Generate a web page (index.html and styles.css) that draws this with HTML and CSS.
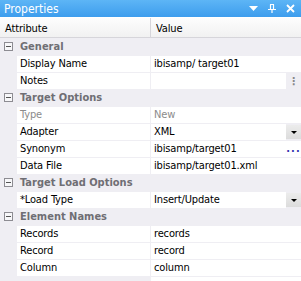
FILE: index.html
```html
<!DOCTYPE html>
<html lang="en">
<head>
  <meta charset="UTF-8" />
  <title>Properties</title>
  <link rel="stylesheet" href="styles.css">
</head>
<body>
  <div class="panel">
    <div class="titlebar">
      <span class="title">Properties</span>
      <div class="tools">
        <svg width="9" height="5" viewBox="0 0 9 5"><path d="M0 0h9L4.5 5z" fill="#fff"/></svg>
        <svg width="8" height="9" viewBox="0 0 8 9"><path d="M2 0.5h4M2.5 0.5v5M5.5 0.5v5M0 5.5h8M4 5.5v3.5" stroke="#fff" stroke-width="1.2" fill="none"/></svg>
        <svg width="9" height="9" viewBox="0 0 9 9"><path d="M1 1l7 7M8 1l-7 7" stroke="#fff" stroke-width="1.8"/></svg>
      </div>
    </div>
    <div class="head">
      <div class="head-name">Attribute</div>
      <div class="head-value">Value</div>
    </div>

    <div class="section"><span class="toggle"></span>General</div>
    <div class="row"><div class="name">Display Name</div><div class="value">ibisamp/ target01</div></div>
    <div class="row"><div class="name">Notes</div><div class="value"></div><div class="btn more">⋮</div></div>

    <div class="section"><span class="toggle"></span>Target Options</div>
    <div class="row off"><div class="name">Type</div><div class="value">New</div></div>
    <div class="row"><div class="name">Adapter</div><div class="value">XML</div><div class="btn drop"></div></div>
    <div class="row"><div class="name">Synonym</div><div class="value">ibisamp/target01</div><div class="btn dots">...</div></div>
    <div class="row"><div class="name">Data File</div><div class="value">ibisamp/target01.xml</div></div>

    <div class="section"><span class="toggle"></span>Target Load Options</div>
    <div class="row"><div class="name">*Load Type</div><div class="value">Insert/Update</div><div class="btn drop"></div></div>

    <div class="section"><span class="toggle"></span>Element Names</div>
    <div class="row"><div class="name">Records</div><div class="value">records</div></div>
    <div class="row"><div class="name">Record</div><div class="value">record</div></div>
    <div class="row"><div class="name">Column</div><div class="value">column</div></div>
    <div class="row"><div class="name blank"></div><div class="value"></div></div>
  </div>
</body>
</html>
```

FILE: styles.css
```css
* { margin: 0; padding: 0; box-sizing: border-box; }
body {
  font-family: "DejaVu Sans Condensed", "DejaVu Sans", sans-serif;
  font-stretch: condensed;
  font-size: 11px;
  letter-spacing: -0.15px;
  color: #000;
  background: #efeef3;
  overflow: hidden;
}
.panel { width: 301px; height: 281px; overflow: hidden; }
.titlebar {
  height: 17px;
  background: linear-gradient(#5db5f6, #3d9ded);
  display: flex;
  align-items: center;
  justify-content: space-between;
  padding: 0 6px 0 4px;
}
.title { color: #fff; font-size: 12px; letter-spacing: 0; }
.tools { display: flex; align-items: center; gap: 10px; }
.tools svg { display: block; }
.head {
  height: 21px;
  display: flex;
  background: linear-gradient(#fdfdfd, #f1f1f1);
  border-top: 1px solid #fff;
  border-bottom: 1px solid #d6d5da;
}
.head-name {
  width: 151px;
  padding: 4px 5px 0;
  border-right: 1px solid #d6d5da;
}
.head-value { padding: 4px 5px 0; }
.section {
  height: 17px;
  display: flex;
  align-items: center;
  font-weight: bold;
  letter-spacing: 0;
  color: #6f6e74;
}
.toggle {
  width: 9px; height: 9px;
  border: 1px solid #8d8c92;
  margin: 0 7px 0 4px;
  position: relative;
  background: #f7f7f9;
}
.toggle::after {
  content: "";
  position: absolute;
  left: 1px; right: 1px; top: 3px;
  height: 1px;
  background: #555;
}
.row {
  height: 17px;
  padding-top: 1px;
  display: flex;
}
.name {
  width: 133px;
  margin-left: 17px;
  margin-right: 1px;
  background: #fff;
  padding: 1px 3px;
  white-space: nowrap;
}
.value {
  flex: 1;
  background: #fff;
  padding: 1px 3px;
  white-space: nowrap;
}
.off .name, .off .value { color: #8b8b8b; }
.btn {
  width: 15px;
  display: flex;
  align-items: center;
  justify-content: center;
}
.drop { background: linear-gradient(#ececec, #dcdcdc); margin: 1px 0; }
.drop::after {
  content: "";
  border-left: 3px solid transparent;
  border-right: 3px solid transparent;
  border-top: 3px solid #000;
}
.more { color: #888; font-weight: bold; }
.dots { background: #fff; color: #3535b0; font-weight: bold; letter-spacing: 1px; line-height: 10px; }
.blank { background: transparent; }
```
